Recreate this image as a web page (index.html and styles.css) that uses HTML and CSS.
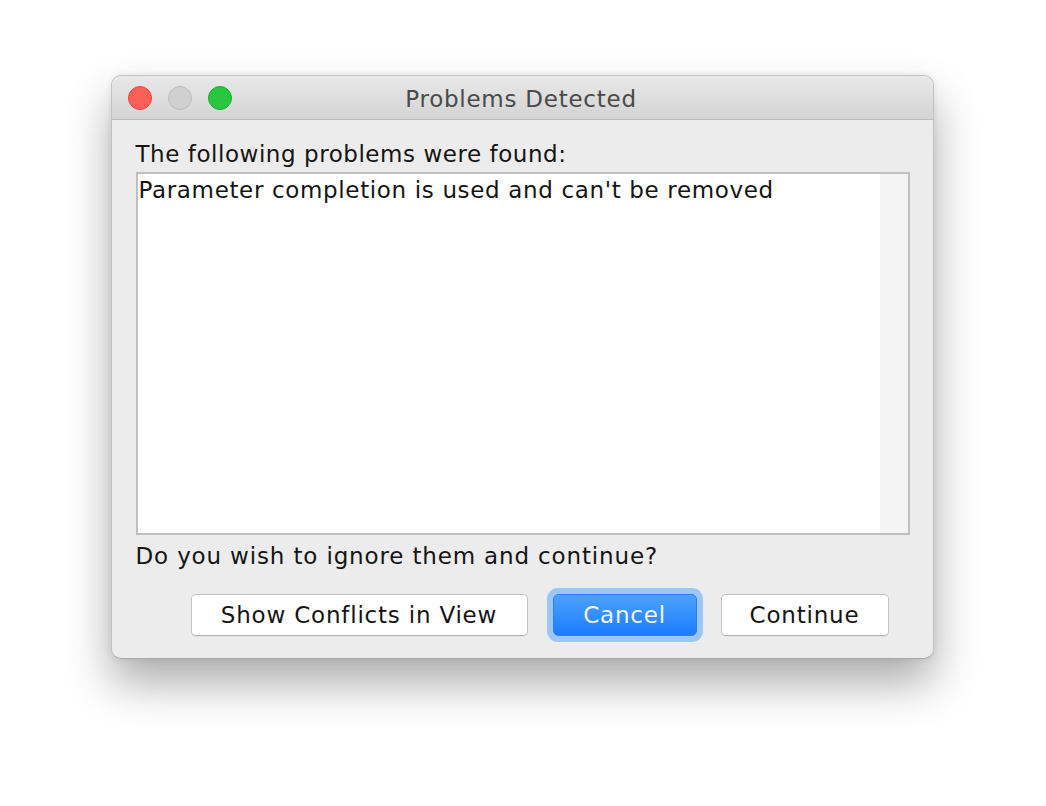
FILE: index.html
```html
<!DOCTYPE html>
<html>
<head>
<meta charset="utf-8">
<link rel="stylesheet" href="styles.css">
</head>
<body>
<div class="page">
  <div class="window">
    <div class="titlebar">
      <div class="lights">
        <span class="light red"></span>
        <span class="light gray"></span>
        <span class="light green"></span>
      </div>
      <div class="title">Problems Detected</div>
      <div class="spacer"></div>
    </div>
    <div class="content">
      <div class="label top-label">The following problems were found:</div>
      <div class="listbox">
        <div class="list-text">Parameter completion is used and can't be removed</div>
        <div class="track"></div>
      </div>
      <div class="label bottom-label">Do you wish to ignore them and continue?</div>
      <div class="buttons">
        <button class="btn show">Show Conflicts in View</button>
        <button class="btn primary">Cancel</button>
        <button class="btn cont">Continue</button>
      </div>
    </div>
  </div>
</div>
</body>
</html>
```
FILE: styles.css
```css
html, body {
  margin: 0;
  padding: 0;
  background: #ffffff;
}
.page {
  width: 1046px;
  height: 806px;
  display: flex;
  justify-content: center;
  padding-top: 75px;
  padding-right: 2px;
  box-sizing: border-box;
  font-family: "DejaVu Sans", sans-serif;
}
.window {
  width: 823px;
  height: 584px;
  box-sizing: border-box;
  background: #ececec;
  border: 1px solid #c2c2c2;
  border-bottom-color: #a9a9a9;
  border-radius: 10px;
  box-shadow: 0 24px 45px rgba(0,0,0,0.33), 0 0 6px rgba(0,0,0,0.08);
  overflow: hidden;
  display: flex;
  flex-direction: column;
}
.titlebar {
  height: 44px;
  flex: none;
  box-sizing: border-box;
  border-bottom: 1px solid #bdbdbd;
  background: linear-gradient(#e9e9e9, #d3d3d3);
  display: grid;
  grid-template-columns: 1fr auto 1fr;
  align-items: center;
}
.lights {
  display: flex;
  gap: 16px;
  padding-left: 16px;
  padding-top: 1px;
}
.light {
  width: 24px;
  height: 24px;
  border-radius: 50%;
  box-sizing: border-box;
}
.red { background: #fe5f57; border: 1px solid #e2463f; }
.gray { background: #d0d0d0; border: 1px solid #bcbcbc; }
.green { background: #29c73f; border: 1px solid #17ad2c; }
.title {
  font-size: 23px;
  letter-spacing: 0.75px;
  color: #4a4a4a;
  padding-top: 2px;
  padding-right: 2px;
}
.content {
  flex: 1;
  padding: 0 23px 0 24px;
  display: flex;
  flex-direction: column;
}
.label {
  font-size: 23px;
  letter-spacing: 0.55px;
  color: #141414;
  height: 30px;
  line-height: 30px;
}
.top-label {
  margin-top: 19px;
  margin-bottom: 3px;
}
.bottom-label {
  letter-spacing: 0.85px;
  margin-top: 6px;
}
.listbox {
  height: 363px;
  box-sizing: border-box;
  border: 2px solid #bfbfbf;
  background: #ffffff;
  display: flex;
}
.list-text {
  flex: 1;
  font-size: 23px;
  letter-spacing: 0.65px;
  color: #141414;
  line-height: 30px;
  padding-left: 1px;
  padding-top: 1px;
}
.track {
  width: 28px;
  background: #f3f3f3;
}
.buttons {
  display: flex;
  justify-content: flex-end;
  gap: 24px;
  padding-right: 21px;
  margin-top: 23px;
}
.btn {
  height: 42px;
  box-sizing: border-box;
  background: #ffffff;
  border: 1px solid #c3c3c3;
  border-bottom-color: #b0b0b0;
  border-radius: 5px;
  font-family: "DejaVu Sans", sans-serif;
  font-size: 23px;
  letter-spacing: 0.8px;
  color: #141414;
  padding: 0;
  text-align: center;
  box-shadow: 0 1px 0 rgba(0,0,0,0.04);
}
.btn.show { width: 337px; margin-right: 1px; }
.btn.cont { width: 168px; }
.btn.primary {
  width: 144px;
  color: #f2f6ff;
  border: 1px solid #2a7ef0;
  background: linear-gradient(#4ea2fd, #1b7cff);
  box-shadow: 0 0 0 6px #9cc6f6;
}
```
